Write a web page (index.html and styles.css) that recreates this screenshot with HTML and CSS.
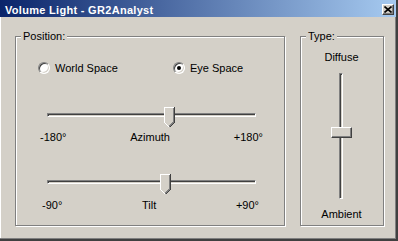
FILE: index.html
```html
<!DOCTYPE html>
<html lang="en">
<head>
  <meta charset="UTF-8">
  <title>Volume Light - GR2Analyst</title>
  <link rel="stylesheet" href="styles.css">
</head>
<body>

<div class="window">
  <div class="titlebar">
    <span class="title">Volume Light - GR2Analyst</span>
    <button class="close-btn" title="Close">
      <svg width="8" height="7" viewBox="0 0 8 7">
        <path d="M0.5 0.5L7.5 6.5M7.5 0.5L0.5 6.5" stroke="#000" stroke-width="1.6"/>
      </svg>
    </button>
  </div>

  <div class="client">
    <div class="group group-position">
      <div class="group-title">Position:</div>

      <div class="radio-row">
        <label class="radio-opt radio-world"><span class="radio"></span>World Space</label>
        <label class="radio-opt"><span class="radio checked"></span>Eye Space</label>
      </div>

      <div class="hslider slider-azimuth">
        <div class="track"></div>
        <svg class="thumb" width="11" height="21" viewBox="0 0 11 21">
          <polygon points="0,0 11,0 11,15 5.5,20.5 0,15" fill="#d4d0c8"/>
          <polyline points="0.5,15.5 0.5,0.5 10,0.5" fill="none" stroke="#fff"/>
          <polyline points="0.5,15.5 5,20" fill="none" stroke="#fff"/>
          <polyline points="10.5,0 10.5,15.5 5.5,20.5" fill="none" stroke="#404040"/>
          <polyline points="9.5,1 9.5,15 5,19.5" fill="none" stroke="#808080"/>
        </svg>
      </div>
      <div class="scale scale-azimuth">
        <span>-180°</span><span>Azimuth</span><span>+180°</span>
      </div>

      <div class="hslider slider-tilt">
        <div class="track"></div>
        <svg class="thumb" width="11" height="21" viewBox="0 0 11 21">
          <polygon points="0,0 11,0 11,15 5.5,20.5 0,15" fill="#d4d0c8"/>
          <polyline points="0.5,15.5 0.5,0.5 10,0.5" fill="none" stroke="#fff"/>
          <polyline points="0.5,15.5 5,20" fill="none" stroke="#fff"/>
          <polyline points="10.5,0 10.5,15.5 5.5,20.5" fill="none" stroke="#404040"/>
          <polyline points="9.5,1 9.5,15 5,19.5" fill="none" stroke="#808080"/>
        </svg>
      </div>
      <div class="scale scale-tilt">
        <span>-90°</span><span>Tilt</span><span>+90°</span>
      </div>
    </div>

    <div class="group group-type">
      <div class="group-title">Type:</div>
      <div class="type-body">
        <div class="vlabel vlabel-top">Diffuse</div>
        <div class="vslider">
          <div class="vtrack"></div>
          <div class="vthumb"></div>
        </div>
        <div class="vlabel vlabel-bottom">Ambient</div>
      </div>
    </div>
  </div>
</div>

</body>
</html>
```

FILE: styles.css
```css
* { box-sizing: border-box; }
body {
  margin: 0;
  background: #d4d0c8;
  font-family: "Liberation Sans", Arial, sans-serif;
  font-size: 11px;
  color: #000;
}

.window {
  width: 398px;
  height: 241px;
  background: #d4d0c8;
  border-right: 2px solid #404040;
  border-bottom: 2px solid #404040;
  box-shadow: inset -1px -1px 0 #808080;
}

/* title bar */
.titlebar {
  display: flex;
  align-items: flex-start;
  height: 17px;
  width: 396px;
  background: linear-gradient(to right, #0a246a, #a6caf0);
}

.title {
  padding: 3px 0 0 5px;
  line-height: 14px;
  font-weight: bold;
  letter-spacing: 0.3px;
  color: #fff;
  white-space: nowrap;
}

.close-btn {
  display: flex;
  align-items: center;
  justify-content: center;
  margin: 4px 2px 0 auto;
  width: 12px;
  height: 11px;
  padding: 0;
  background: #d4d0c8;
  border: 1px solid;
  border-color: #fff #404040 #404040 #fff;
  box-shadow: inset -1px -1px 0 #808080;
}

.close-btn svg { display: block; }

/* client area */
.client {
  display: flex;
  gap: 15px;
  padding: 19px 0 0 15px;
  box-shadow: inset 1px 0 0 #fff;
  height: 221px;
}

.group {
  height: 190px;
  border: 1px solid #808080;
  box-shadow: 1px 1px 0 #fff, inset 1px 1px 0 #fff;
}

.group-position { width: 270px; }
.group-type { width: 84px; }

.group-title {
  width: fit-content;
  margin: -7px 0 0 5px;
  padding: 0 2px;
  line-height: 13px;
  background: #d4d0c8;
}

/* radio buttons */
.radio-row {
  display: flex;
  align-items: center;
  height: 12px;
  margin-top: 19px;
  padding-left: 22px;
}

.radio-opt {
  display: flex;
  align-items: center;
  gap: 5px;
  line-height: 12px;
}

.radio-world { width: 135px; }

.radio {
  position: relative;
  width: 12px;
  height: 12px;
  border-radius: 50%;
  background: #fff;
  border: 1px solid;
  border-color: #808080 #fff #fff #808080;
  box-shadow: inset 1px 1px 0 #404040, inset -1px -1px 0 #d4d0c8;
}

.radio.checked::after {
  content: "";
  position: absolute;
  left: 3px;
  top: 3px;
  width: 4px;
  height: 4px;
  border-radius: 50%;
  background: #000;
}

/* horizontal sliders */
.hslider {
  position: relative;
  width: 209px;
  height: 21px;
  margin-left: 31px;
  padding-top: 6px;
}

.slider-azimuth { margin-top: 33px; }
.slider-tilt { margin-top: 31px; }

.track {
  height: 4px;
  border-top: 1px solid #808080;
  border-left: 1px solid #808080;
  border-bottom: 1px solid #fff;
  border-right: 1px solid #fff;
  box-shadow: inset 1px 1px 0 #404040;
}

.thumb {
  position: absolute;
  top: 0;
  display: block;
  shape-rendering: crispEdges;
}

.slider-azimuth .thumb { left: 117px; }
.slider-tilt .thumb { left: 113px; }

.scale {
  display: flex;
  justify-content: space-between;
  line-height: 12px;
  white-space: nowrap;
}

.scale-azimuth {
  width: 223px;
  margin: 3px 0 0 24px;
}

.scale-tilt {
  width: 217px;
  margin: 4px 0 0 26px;
}

/* vertical slider */
.type-body {
  display: flex;
  flex-direction: column;
  align-items: center;
  padding-right: 1px;
}

.vlabel { line-height: 12px; }
.vlabel-top { margin-top: 8px; }
.vlabel-bottom { margin-top: 9px; }

.vslider {
  position: relative;
  width: 21px;
  height: 126px;
  margin-top: 10px;
}

.vtrack {
  width: 4px;
  height: 100%;
  margin-left: 8px;
  border-top: 1px solid #808080;
  border-left: 1px solid #808080;
  border-bottom: 1px solid #fff;
  border-right: 1px solid #fff;
  box-shadow: inset 1px 1px 0 #404040;
}

.vthumb {
  position: absolute;
  left: 0;
  top: 54px;
  width: 21px;
  height: 11px;
  background: #d4d0c8;
  border: 1px solid;
  border-color: #fff #404040 #404040 #fff;
  box-shadow: inset -1px -1px 0 #808080;
}
```
